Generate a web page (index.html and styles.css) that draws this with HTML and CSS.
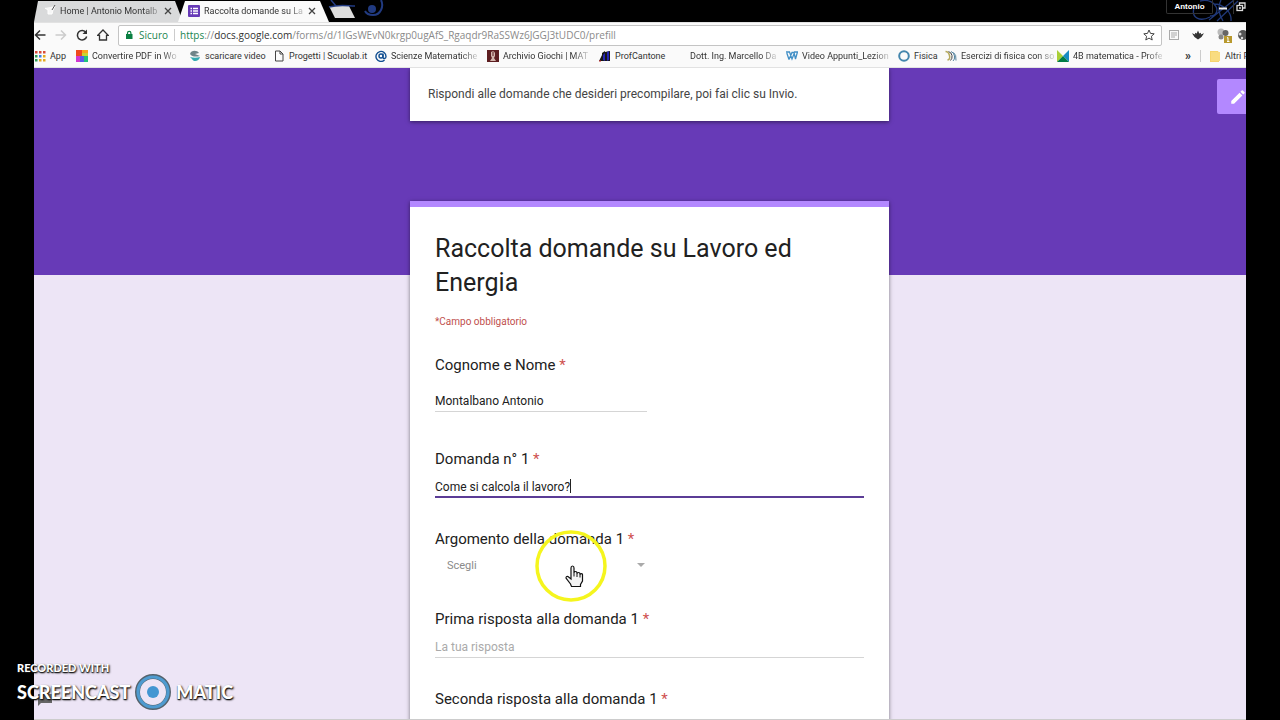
FILE: index.html
```html
<!DOCTYPE html>
<html lang="it">
<head>
<meta charset="utf-8">
<title>Raccolta domande su Lavoro ed Energia</title>
<link rel="stylesheet" href="styles.css">
</head>
<body>
<div class="browser">
  <header class="tabstrip">
    <div class="tab tab-idle">
      <svg class="tab-icon" viewBox="0 0 12 12"><path d="M1 3l3 2v4h4l1-4 2-4" fill="#f7f7f7" stroke="#fff"/><path d="M8 5l3-5" stroke="#555"/></svg>
      <span class="tab-title">Home | Antonio Montalb</span>
      <button class="tab-close" aria-label="Chiudi scheda"><svg viewBox="0 0 8 8"><path d="M1 1l6 6M7 1L1 7" stroke="#444" stroke-width="1.3"/></svg></button>
    </div>
    <div class="tab tab-active">
      <svg class="tab-icon" viewBox="0 0 12 12"><rect width="12" height="12" rx="1" fill="#673ab7"/><path d="M2.500 3.500h1.500M5 3.500h5M2.500 6h1.500M5 6h5M2.500 8.500h1.500M5 8.500h5" stroke="#fff" stroke-width="1.400"/></svg>
      <span class="tab-title">Raccolta domande su La</span>
      <button class="tab-close" aria-label="Chiudi scheda"><svg viewBox="0 0 8 8"><path d="M1 1l6 6M7 1L1 7" stroke="#444" stroke-width="1.3"/></svg></button>
    </div>
    <button class="new-tab" aria-label="Nuova scheda"></button>
    <svg class="swirl" viewBox="0 0 60 22" fill="none" stroke="#213a80"><path d="M1 7C12 4 20 6 27 6M3 0l5 6" stroke-width="1.500"/><path d="M53 0c3 6 0 15-8 15c-5 0-7-2-8-4" stroke-width="2"/><circle cx="44" cy="9" r="4" fill="#213a80" stroke="none"/></svg>
    <div class="window-buttons">
      <svg class="flourish" viewBox="0 0 80 22" fill="none" stroke="#203878" stroke-width="1.300"><path d="M18 8C15 18 24 22 34 17M24 1c18-4 22 15 10 15M33 20L58 0M41 21L62 1M38 4c9 0 18 8 17 17M72 7c8-1 8 10 2 9M45 0c-4 8-2 14 2 21"/></svg>
      <button class="profile">Antonio</button>
      <button class="win" aria-label="Riduci"><svg viewBox="0 0 10 10"><path d="M1 6.500h8" stroke="#eee" stroke-width="2"/></svg></button>
      <button class="win" aria-label="Ripristina"><svg viewBox="0 0 10 10" fill="none" stroke="#ddd" stroke-width="1.300"><path d="M3.500 3V1h5.500v5H7"/><rect x="1" y="3.500" width="5.500" height="5"/><path d="M3 6h2"/></svg></button>
    </div>
  </header>

  <div class="toolbar">
    <button class="nav" aria-label="Indietro"><svg viewBox="0 0 12 12" fill="none" stroke="#333" stroke-width="1.500"><path d="M11.500 6H1.500M6 1.500L1.500 6L6 10.500"/></svg></button>
    <button class="nav" aria-label="Avanti"><svg viewBox="0 0 12 12" fill="none" stroke="#ccc" stroke-width="1.500"><path d="M.5 6h10M6 1.500L10.500 6L6 10.500"/></svg></button>
    <button class="nav" aria-label="Ricarica"><svg viewBox="0 0 12 12" fill="none" stroke="#333" stroke-width="1.500"><path d="M10 3.500A4.700 4.700 0 1 0 10.700 7.500"/><path d="M11 .5v4.500H6.500z" fill="#333" stroke="none"/></svg></button>
    <button class="nav" aria-label="Pagina iniziale"><svg viewBox="0 0 12 12" fill="none" stroke="#333" stroke-width="1.300"><path d="M.8 6.300L6 1l5.200 5.300H9.500V11H2.500V6.300z"/></svg></button>
    <div class="address">
      <svg class="lock" viewBox="0 0 8 10"><rect x="1" y="4" width="6.500" height="5" fill="#0b8043"/><path d="M2.500 4V3a1.700 1.700 0 0 1 3.400 0v1" fill="none" stroke="#0b8043" stroke-width="1.200"/></svg>
      <span class="secure">Sicuro</span>
      <span class="url"><span class="scheme">https</span>://<span class="host">docs.google.com</span>/forms/d/1IGsWEvN0krgp0ugAfS_Rgaqdr9RaSSWz6JGGJ3tUDC0/prefill</span>
      <button class="star" aria-label="Aggiungi ai preferiti"><svg viewBox="0 0 12 12"><path d="M6 1l1.500 3.400 3.700.4-2.800 2.500.8 3.700L6 9.100 2.800 11l.8-3.700L.8 4.800l3.700-.4z" fill="none" stroke="#444"/></svg></button>
    </div>
    <div class="extensions">
      <svg viewBox="0 0 12 12" fill="none" stroke="#aaa"><rect x="1.500" y="1.500" width="9" height="9"/><path d="M3 4h6M3 6h6M3 8h4"/></svg>
      <svg viewBox="0 0 12 12" fill="#333"><path d="M6 1.500l1.300 3L9 3.800 8.800 5.500 12 4.200 9.500 8 6 10.500 2.500 8 0 4.200l3.200 1.300L3 3.800l1.700.7z"/></svg>
      <svg viewBox="0 0 16 16"><circle cx="5" cy="5" r="3.500" fill="#bbb"/><circle cx="9.500" cy="6" r="3" fill="#666"/><circle cx="5" cy="10" r="2.500" fill="#888"/><rect x="8" y="9" width="8" height="7" fill="#b8992e"/><path d="M11 11l1-.5V15M11 14.500h2.500" stroke="#fff" fill="none"/></svg>
      <svg viewBox="0 0 12 12"><circle cx="6" cy="6" r="5" fill="#555"/><circle cx="3" cy="5" r="1.500" fill="#ddd"/><circle cx="5" cy="9" r="1.200" fill="#ddd"/></svg>
    </div>
  </div>

  <nav class="bookmarks">
    <a href="#"><svg viewBox="0 0 12 12"><g fill="#d84a3a"><path d="M1 1h2.500v2.500H1zM5 1h2.500v2.500H5zM9 1h2.500v2.500H9z"/></g><path d="M1 5h2.500v2.500H1z" fill="#2e9e53"/><path d="M5 5h2.500v2.500H5z" fill="#3b7de0"/><path d="M9 5h2.500v2.500H9zM5 9h2.500v2.500H5zM9 9h2.500v2.500H9z" fill="#e5a91e"/><path d="M1 9h2.500v2.500H1z" fill="#2e9e53"/></svg><span>App</span></a>
    <a href="#"><svg viewBox="0 0 12 12"><path d="M0 0h6v6H0z" fill="#ee4a1c"/><path d="M6 0h6v3H6z" fill="#f8a51b"/><path d="M6 3h6v3H6z" fill="#c7d530"/><path d="M0 6h4v6H0z" fill="#d038d0"/><path d="M4 6h4v6H4z" fill="#5b5bea"/><path d="M8 6h4v6H8z" fill="#1fc47b"/></svg><span class="faded">Convertire PDF in Wo</span></a>
    <a href="#"><svg viewBox="0 0 12 12"><path d="M1 4c1-4 7-4 9-1L6 4l5 2c-4 1-8 1-10-2z" fill="#6f8488"/><path d="M1 7c3 1 7 1 10 0c-1 5-7 5-8 2z" fill="#35aab0"/></svg><span>scaricare video</span></a>
    <a href="#"><svg viewBox="0 0 12 12" fill="none" stroke="#444"><path d="M2.500 1h4.500l3 3v7H2.500zM7 1v3h3"/></svg><span>Progetti | Scuolab.it</span></a>
    <a href="#"><svg viewBox="0 0 12 12" fill="none" stroke="#124f91" stroke-width="1.400"><path d="M9.500 10A5 5 0 1 1 11 6.500C11 9 8.500 9 8 7.500V3.500"/><circle cx="6" cy="6" r="2"/></svg><span class="faded">Scienze Matematiche</span></a>
    <a href="#"><svg viewBox="0 0 12 12"><path d="M0 0h12v12H0z" fill="#5d1d20"/><path d="M4 2q3-2 4 1v3L7 8l2 3H3l2-3-1-2z" fill="#d5b7ae"/><path d="M5 3h2M5 5h2" stroke="#5d1d20"/></svg><span class="faded">Archivio Giochi | MAT</span></a>
    <a href="#"><svg viewBox="0 0 12 12"><path d="M0 11l3-6v6zM3 11V3l3-2v10zM6 11V2l5-1v10H9z" fill="#171717"/><path d="M4 10V5l2-2v8zM8 11V2l2-1v9z" fill="#2525b5"/><path d="M0 11h2" stroke="#c22"/></svg><span>ProfCantone</span></a>
    <a href="#"><svg viewBox="0 0 12 12"></svg><span class="faded">Dott. Ing. Marcello Da</span></a>
    <a href="#"><svg viewBox="0 0 12 12" fill="none" stroke="#418fc6" stroke-width="1.300"><path d="M0 2h3.500l2.500 7 2-5M3 9.500L.8 3M3 9.500L6 2.500h2l1.500 6.500L11.500 2H8"/></svg><span class="faded">Video Appunti_Lezion</span></a>
    <a href="#"><svg viewBox="0 0 12 12"><circle cx="6" cy="6" r="4.800" fill="none" stroke="#4486ad" stroke-width="2"/></svg><span>Fisica</span></a>
    <a href="#"><svg viewBox="0 0 12 12" fill="none"><path d="M.5 1.500q3 0 4 4t-2 4.500" stroke="#b5a95c" stroke-width="1.500"/><path d="M3.500 1.500q3 1 3.500 4t-1.500 5" stroke="#444"/><path d="M6 1.500q3 1 3.500 4.500t-1.500 5M8.500 2.500q3 2 2.500 8" stroke="#55849e"/></svg><span class="faded">Esercizi di fisica con so</span></a>
    <a href="#"><svg viewBox="0 0 12 12"><path d="M0 0v12l6-6z" fill="#a9cf38"/><path d="M12 0v12L6 6z" fill="#168bc4"/><path d="M0 12l6-6 6 6z" fill="#007c47"/></svg><span class="faded">4B matematica - Profe</span></a>
    <div class="more">
      <button aria-label="Altri">»</button>
      <a href="#" class="other"><svg viewBox="0 0 12 12"><path d="M1 1h8l1 2v9H1z" fill="#f5d36d"/><path d="M2 2h9v9H2z" fill="#f9dc80"/></svg><span>Altri P</span></a>
    </div>
  </nav>

  <main class="page">
    <section class="intro">Rispondi alle domande che desideri precompilare, poi fai clic su Invio.</section>
    <button class="edit" aria-label="Modifica"><svg viewBox="0 0 24 24"><path d="M3 17.250V21h3.750L17.800 9.900l-3.700-3.700zM20.700 7a1 1 0 0 0 0-1.400l-2.300-2.300a1 1 0 0 0-1.400 0l-1.800 1.800 3.700 3.700z" fill="#fff"/></svg></button>
    <form class="form">
      <h1>Raccolta domande su Lavoro ed Energia</h1>
      <p class="required-note">*Campo obbligatorio</p>
      <div class="field field-name">
        <label for="nome">Cognome e Nome <b>*</b></label>
        <input id="nome" class="short" type="text" value="Montalbano Antonio">
      </div>
      <div class="field">
        <label for="d1">Domanda n° 1 <b>*</b></label>
        <div class="focused"><input id="d1" type="text" value="Come si calcola il lavoro?"><i class="caret"></i></div>
      </div>
      <div class="field">
        <label for="arg">Argomento della domanda 1 <b>*</b></label>
        <div class="choice">
          <select id="arg"><option>Scegli</option></select>
          <svg class="arrow" viewBox="0 0 8 4"><path d="M0 0h8L4 4z" fill="#aaa"/></svg>
          <svg class="pointer" viewBox="0 0 72 72"><circle cx="36" cy="36" r="34" fill="none" stroke="#f5f51e" stroke-width="3.500"/><path d="M36 49V38q0-2 1.500-2t1.500 2v5q0-1.500 1.500-1.500T42 43v1q0-1.500 1.500-1.500T45 44v1q0-1.300 1.300-1.300T47.500 45v6l-2 3.500V56.500H36.500l-1-2.500-4.500-6q0-2 2-1.500z" fill="#f4f4f4" stroke="#111" stroke-width="1.200"/><path d="M39 43v3.500M42 44v3M45 45v2.500" stroke="#111"/></svg>
        </div>
      </div>
      <div class="field">
        <label for="r1">Prima risposta alla domanda 1 <b>*</b></label>
        <input id="r1" type="text" placeholder="La tua risposta">
      </div>
      <div class="field">
        <label for="r2">Seconda risposta alla domanda 1 <b>*</b></label>
      </div>
    </form>
  </main>
</div>
<svg class="chat" viewBox="0 0 14 12"><path d="M0 0h14v9H3l-3 3z" fill="#666"/></svg>
<aside class="watermark">
  <div class="recorded">RECORDED WITH</div>
  <div class="brand"><span>SCREENCAST</span><svg viewBox="0 0 38 38"><circle cx="19" cy="19" r="15.500" fill="none" stroke="#55626c" stroke-width="5"/><circle cx="19" cy="19" r="15" fill="none" stroke="#4f9bd0" stroke-width="3.200"/><circle cx="19" cy="19" r="6" fill="#4396d2"/></svg><span>MATIC</span></div>
</aside>
</body>
</html>
```
FILE: styles.css
```css
* { box-sizing: border-box; }
body {
  margin: 0;
  padding: 0 34px;
  height: 100vh;
  overflow: hidden;
  position: relative;
  background: #000;
  font-family: Roboto, "Liberation Sans", sans-serif;
}
button { border: 0; padding: 0; background: none; font: inherit; color: inherit; display: block; }
svg { display: block; flex: none; }
.browser { height: 100%; display: flex; flex-direction: column; overflow: hidden; }

.tabstrip, .toolbar, .bookmarks { font-size: 9px; color: #333; flex: none; }
.tabstrip { height: 22px; display: flex; position: relative; overflow: hidden; }
.tab { display: flex; align-items: center; gap: 4px; padding-left: 10px; height: 22px; }
.tab-idle { width: 149px; background: #d9dadb; clip-path: polygon(0 100%, 4px 1px, 141px 1px, 100% 100%); }
.tab-active { width: 151px; margin-left: -5px; background: #fafafa; clip-path: polygon(0 100%, 7px 1px, 142px 1px, 100% 100%); }
.tab-icon { width: 12px; height: 12px; }
.tab-title { width: 100px; white-space: nowrap; mask-image: linear-gradient(to right, #000 84%, rgba(0, 0, 0, .2)); }
.tab-close svg { width: 8px; height: 8px; }
.new-tab { width: 26px; height: 12px; margin-top: 6px; background: #dcdcdc; clip-path: polygon(0 0, 20px 0, 100% 100%, 6px 100%); }
.swirl { position: absolute; left: 294px; top: 0; width: 60px; height: 22px; }
.window-buttons { margin-left: auto; height: 14px; display: flex; position: relative; }
.flourish { position: absolute; right: -10px; top: 0; width: 80px; height: 22px; }
.profile { position: relative; width: 47px; border: 1px solid #333; border-top: 0; border-radius: 0 0 2px 2px; margin-right: 3px; color: #fff; font: bold 8px "Liberation Sans", sans-serif; }
.win { position: relative; width: 18px; padding-left: 2px; border-right: 1px solid #333; }
.win:last-child { width: 12px; border: 0; }
.win svg { width: 10px; height: 10px; }

.toolbar { height: 25px; display: flex; align-items: center; background: #fafafa; border-top: 1px solid #e2e2e2; overflow: hidden; font-family: "Open Sans", "Noto Sans", sans-serif; }
.nav { width: 21px; flex: none; }
.nav svg { width: 12px; height: 12px; }
.address { flex: 1; height: 21px; display: flex; align-items: center; margin-right: 6px; padding: 0 6px; background: #fff; border: 1px solid #c4c4c4; border-radius: 2px; font-size: 10px; }
.lock { width: 8px; height: 10px; }
.secure { color: #1a8550; margin-left: 6px; padding-right: 6px; border-right: 1px solid #ccc; line-height: 12px; }
.url { margin-left: 5px; color: #8a8a8a; }
.scheme { color: #1a8550; }
.host { color: #333; }
.star { margin-left: auto; }
.star svg { width: 12px; height: 12px; }
.extensions { width: 78px; flex: none; display: flex; align-items: center; gap: 12px; overflow: hidden; }
.extensions svg { width: 12px; height: 12px; }
.extensions svg:nth-child(3) { width: 16px; height: 16px; margin-right: -7px; }

.bookmarks { height: 21px; display: grid; grid-template-columns: 42px 113px 84px 102px 112px 112px 75px 112px 112px 47px 112px 1fr 61px; align-items: center; background: #fafafa; border-bottom: 1px solid #e2e2e2; padding-bottom: 2px; overflow: hidden; }
.bookmarks a { display: flex; align-items: center; gap: 4px; color: #333; text-decoration: none; min-width: 0; }
.bookmarks svg { width: 12px; height: 12px; }
.bookmarks span { white-space: nowrap; }
.bookmarks .faded { mask-image: linear-gradient(to right, #000 82%, rgba(0, 0, 0, .2)); }
.more { display: flex; align-items: center; min-width: 0; overflow: hidden; }
.more button { width: 15px; font-size: 12px; font-weight: bold; line-height: 12px; text-align: left; flex: none; }
.bookmarks .other { flex: none; border-left: 1px solid #ccc; padding-left: 8px; }

.page { flex: 1; min-height: 0; overflow: hidden; position: relative; background: linear-gradient(#673ab7 207px, #ede5f6 207px); border-bottom: 1px solid #ccc; padding-left: 19px; }
.intro, .form { width: 479px; max-width: 100%; margin: 0 auto; background: #fff; box-shadow: 0 1px 4px rgba(0, 0, 0, .5); }
.intro { height: 53px; padding: 18px; font-size: 12px; line-height: 16px; color: #444; }
.edit { position: absolute; right: 0; top: 11px; width: 29px; height: 35px; border-radius: 2px 0 0 2px; background: #b388ff; overflow: hidden; padding-left: 12px; }
.edit svg { width: 18px; height: 18px; }
.form { margin-top: 80px; border-top: 6px solid #b388ff; padding: 25px 25px 40px; }
.form h1 { margin: 0; font-size: 25px; line-height: 34px; font-weight: 400; color: #212121; }
.required-note { margin: 14px 0 25px; font-size: 10px; line-height: 16px; color: #c0504d; }
.field { height: 80px; }
.field-name { height: 94px; }
.field label { display: block; font-size: 15px; line-height: 20px; color: #212121; }
.field b { color: #cf5050; font-weight: 400; }
.field input { display: block; width: 100%; height: 21px; margin-top: 8px; padding: 0; border: 0; border-bottom: 1px solid #d5d5d5; background: none; font: 12px Roboto, sans-serif; color: #212121; outline: 0; }
.field input.short { width: 212px; margin-top: 16px; }
.field input::placeholder { color: #aaa; }
.focused { position: relative; }
.field .focused input { border-bottom: 2px solid #5b3c96; }
.caret { position: absolute; left: 135px; top: 2px; width: 1px; height: 14px; background: #222; }
.choice { position: relative; display: flex; align-items: center; width: 212px; height: 32px; }
.choice select { appearance: none; width: 100%; border: 0; padding: 0 12px; background: none; font: 11px Roboto, sans-serif; color: #8a8a8a; outline: 0; }
.arrow { position: absolute; right: 2px; width: 8px; height: 4px; }
.pointer { position: absolute; left: 100px; top: -19px; width: 72px; height: 72px; }

.chat { position: absolute; left: 38px; top: 694px; width: 14px; height: 12px; }
.watermark { position: absolute; left: 17px; bottom: 9px; font-family: Lato, sans-serif; font-weight: 900; color: #fff; text-shadow: 1px 1px 2px #000, 0 1px 1px #333; }
.recorded { font-size: 11px; line-height: 10px; }
.brand { display: flex; align-items: center; gap: 4px; font-size: 18px; line-height: 36px; }
.brand svg { width: 38px; height: 38px; }
```
